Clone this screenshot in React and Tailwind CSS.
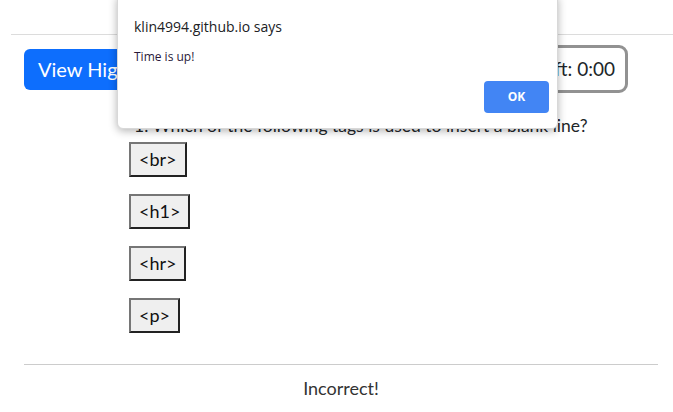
export default function App() {
  const answers = ["<br>", "<h1>", "<hr>", "<p>"];
  return (
    <div className="relative w-[673px] h-[412px] overflow-hidden bg-white" style={{ fontFamily: 'Lato, "Open Sans", sans-serif' }}>
      <div className="h-[35px] ml-[11px] border-b border-[#dcdcdc]"></div>
      <div className="pl-[24px] pr-[15px]">
        <div className="flex items-center justify-between mt-[10px] h-[48px]">
          <button className="h-[41px] px-[14px] rounded-[6px] bg-[#0d6efd] text-white text-[20px] leading-none">View Highscores</button>
          <div className="h-[48px] px-[10px] mr-[30px] flex items-center rounded-[9px] border-[3px] border-[#929292] text-[19px] text-[#212529]">Time left: 0:00</div>
        </div>
        <div className="ml-[110px] mt-[21px] text-[17.5px] leading-[24px] text-[#212529]">1. Which of the following tags is used to insert a blank line?</div>
        <div className="ml-[105px] mt-[4px] flex flex-col items-start gap-[17px]">
          {answers.map((a) => (
            <button key={a} className="h-[35px] px-[8px] bg-[#efefef] border-2 border-t-[#767676] border-l-[#767676] border-b-[#222] border-r-[#222] text-[18px] text-[#111]">{a}</button>
          ))}
        </div>
        <div className="mt-[31px] border-t border-[#cccccc]"></div>
        <div className="text-center mt-[10px] text-[18px] text-[#333]">Incorrect!</div>
      </div>

      <div className="absolute left-[117px] top-[-4px] w-[441px] h-[133px] bg-white rounded-b-[6px] border border-[#d8d8d8] shadow-[0_2px_8px_rgba(0,0,0,0.3)]" style={{ fontFamily: '"Open Sans", sans-serif' }}>
        <div className="pl-[16px] pt-[19px] text-[14px] text-[#202124]">klin4994.github.io says</div>
        <div className="pl-[16px] pt-[11px] text-[12px] text-[#2a1a3a]">Time is up!</div>
        <div className="flex justify-end pr-[8px] mt-[15px]">
          <button className="w-[65px] h-[32px] rounded-[4px] bg-[#4285f4] text-white text-[12px] font-bold">OK</button>
        </div>
      </div>
    </div>
  );
}
